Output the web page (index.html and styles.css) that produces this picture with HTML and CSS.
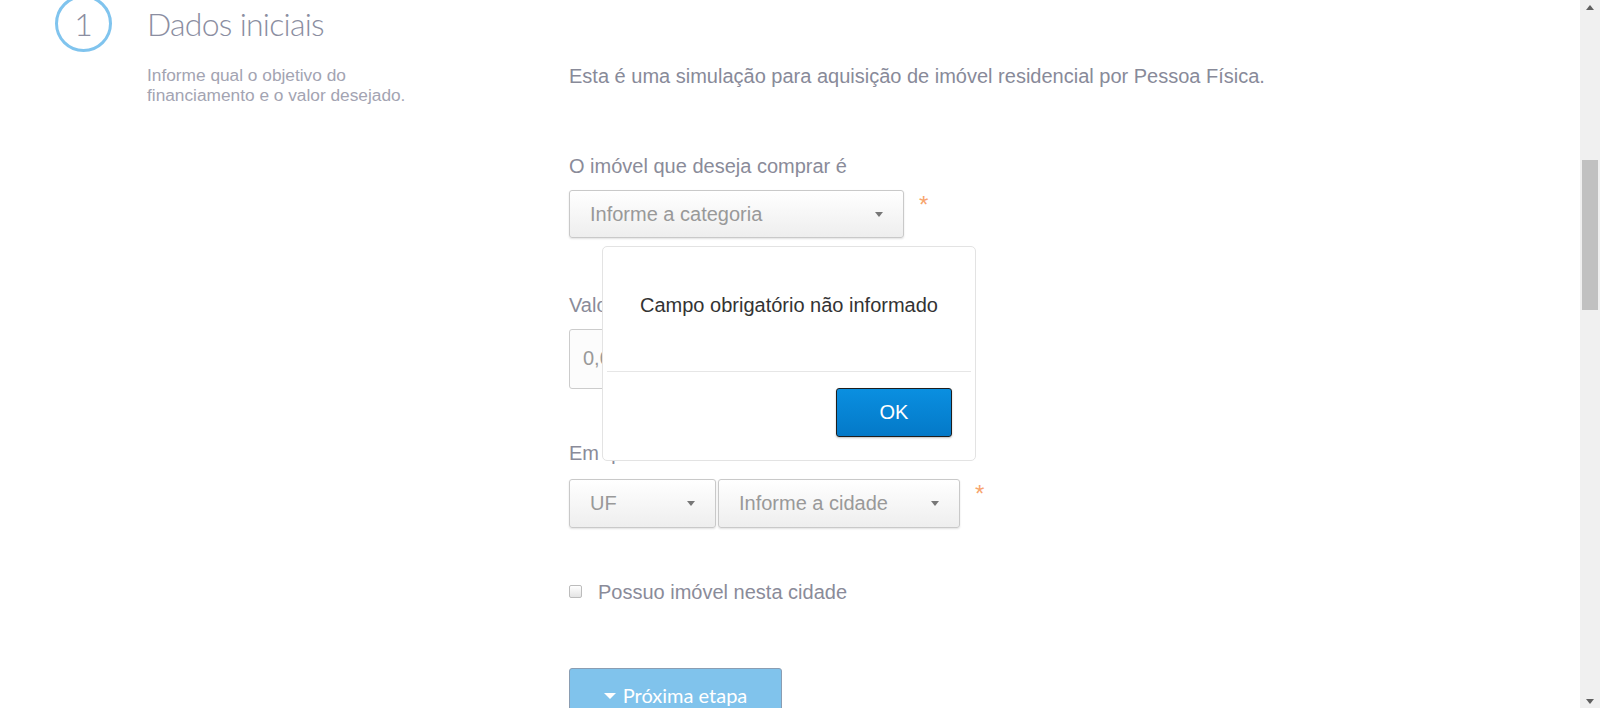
FILE: index.html
```html
<!DOCTYPE html>
<html lang="pt-BR">
<head>
<meta charset="utf-8">
<title>Simulação</title>
<link rel="stylesheet" href="styles.css">
</head>
<body>
<div class="viewport">
  <main class="page">
    <section class="step">
      <div class="step-num">1</div>
      <h2 class="step-title">Dados iniciais</h2>
      <p class="step-desc">Informe qual o objetivo do financiamento e o valor desejado.</p>
      <div class="form">
        <p class="intro">Esta é uma simulação para aquisição de imóvel residencial por Pessoa Física.</p>

        <div class="field field-first">
          <label class="label">O imóvel que deseja comprar é</label>
          <div class="control-row">
            <div class="select select-cat"><span>Informe a categoria</span><i class="caret"></i></div>
            <span class="req">*</span>
          </div>
        </div>

        <div class="field">
          <label class="label">Valor do imóvel</label>
          <div class="input">0,00</div>
        </div>

        <div class="field field-city">
          <label class="label">Em que cidade fica o imóvel?</label>
          <div class="control-row">
            <div class="select select-uf"><span>UF</span><i class="caret"></i></div>
            <div class="select select-city"><span>Informe a cidade</span><i class="caret"></i></div>
            <span class="req">*</span>
          </div>
        </div>

        <div class="check-row"><span class="checkbox"></span><span>Possuo imóvel nesta cidade</span></div>

        <div class="next"><i class="next-caret"></i><span>Próxima etapa</span></div>

        <div class="dialog">
          <div class="dialog-body">Campo obrigatório não informado</div>
          <div class="dialog-foot"><div class="ok">OK</div></div>
        </div>
      </div>
    </section>
  </main>
  <div class="scrollbar">
    <span class="arrow-up"></span>
    <span class="thumb"></span>
    <span class="arrow-down"></span>
  </div>
</div>
</body>
</html>
```

FILE: styles.css
```css
html, body {
  margin: 0;
  padding: 0;
  height: 100%;
  overflow: hidden;
  background: #fff;
}

body {
  font-family: "Liberation Sans", Arial, sans-serif;
}

.viewport {
  display: flex;
  height: 708px;
}

.page {
  flex: 1;
  overflow: hidden;
  height: 708px;
}

.step {
  display: grid;
  grid-template-columns: 92px 422px 1fr;
  grid-template-rows: 52px auto;
  padding-left: 55px;
}

.step-num {
  grid-column: 1;
  grid-row: 1;
  width: 57px;
  height: 57px;
  box-sizing: border-box;
  margin-top: -5px;
  border: 3px solid #80c4ee;
  border-radius: 50%;
  display: flex;
  align-items: center;
  justify-content: center;
  font-family: Lato, "Liberation Sans", sans-serif;
  font-weight: 300;
  font-size: 32px;
  line-height: 32px;
  color: #8b8ea1;
}

.step-title {
  grid-column: 2 / 4;
  grid-row: 1;
  margin: 7.6px 0 0;
  font-family: Lato, "Liberation Sans", sans-serif;
  font-weight: 300;
  font-size: 32px;
  line-height: 32px;
  letter-spacing: -0.75px;
  color: #8b8ea1;
}

.step-desc {
  grid-column: 2;
  grid-row: 2;
  align-self: start;
  margin: 13px 0 0;
  max-width: 280px;
  font-size: 17.3px;
  line-height: 20px;
  color: #a3a4b2;
}

.form {
  grid-column: 3;
  grid-row: 2;
  position: relative;
}

.intro {
  margin: 12px 0 0;
  font-size: 20px;
  line-height: 24px;
  color: #888a99;
}

.field {
  margin-top: 54.5px;
}

.field-first {
  margin-top: 66px;
}

.field-city {
  margin-top: 52.5px;
}

.label {
  display: block;
  margin-bottom: 12px;
  font-size: 20px;
  line-height: 24px;
  color: #8a8b99;
}

.field-city .label {
  margin-bottom: 14px;
}

.control-row {
  display: flex;
  align-items: flex-start;
  gap: 2px;
}

.select {
  box-sizing: border-box;
  height: 48px;
  padding: 0 20px;
  display: flex;
  align-items: center;
  justify-content: space-between;
  border: 1px solid #c9c9c9;
  border-radius: 3px;
  background: linear-gradient(#ffffff, #eeeeee);
  box-shadow: 0 1px 2px rgba(0, 0, 0, 0.12);
  font-size: 20px;
  color: #999;
}

.select-cat {
  width: 335px;
}

.select-uf {
  width: 147px;
  height: 49px;
}

.select-city {
  width: 242px;
  height: 49px;
}

.caret {
  width: 0;
  height: 0;
  border-left: 4px solid transparent;
  border-right: 4px solid transparent;
  border-top: 5px solid #777;
}

.req {
  margin-left: 13px;
  margin-top: 3px;
  font-size: 24px;
  line-height: 24px;
  color: #f7a56e;
}

.input {
  box-sizing: border-box;
  width: 335px;
  height: 60px;
  padding-left: 13px;
  display: flex;
  align-items: center;
  border: 1px solid #cccccc;
  border-radius: 3px;
  background: #fcfcfc;
  font-size: 20px;
  color: #999;
}

.check-row {
  margin-top: 51.5px;
  display: flex;
  align-items: center;
  font-size: 20px;
  line-height: 24px;
  color: #8a8b99;
}

.checkbox {
  box-sizing: border-box;
  width: 13px;
  height: 13px;
  margin-right: 16px;
  border: 1px solid #bcbcbc;
  border-radius: 2px;
  background: linear-gradient(#ffffff, #e4e4e4);
}

.next {
  box-sizing: border-box;
  width: 213px;
  height: 58px;
  margin-top: 64.5px;
  padding-top: 14px;
  display: flex;
  align-items: flex-start;
  justify-content: center;
  background: #80c3ec;
  border: 1px solid #8a9db2;
  border-radius: 3px;
  color: #fff;
  font-family: Lato, "Liberation Sans", sans-serif;
  font-size: 20px;
  line-height: 24px;
}

.next-caret {
  width: 0;
  height: 0;
  margin: 10px 7px 0 0;
  border-left: 6px solid transparent;
  border-right: 6px solid transparent;
  border-top: 6px solid #fff;
}

.dialog {
  position: absolute;
  left: 33px;
  top: 194px;
  width: 374px;
  height: 215px;
  box-sizing: border-box;
  padding: 0 4px;
  display: flex;
  flex-direction: column;
  background: #fff;
  border: 1px solid #e3e3e3;
  border-radius: 5px;
}

.dialog-body {
  box-sizing: border-box;
  height: 125px;
  padding-bottom: 8px;
  display: flex;
  align-items: center;
  justify-content: center;
  border-bottom: 1px solid #e6e6e6;
  font-size: 20px;
  color: #333;
}

.dialog-foot {
  flex: 1;
  display: flex;
  justify-content: flex-end;
  align-items: flex-start;
  padding: 16px 19px 0 0;
}

.ok {
  box-sizing: border-box;
  width: 116px;
  height: 49px;
  display: flex;
  align-items: center;
  justify-content: center;
  background: linear-gradient(#0a8fe0, #0479c8);
  border: 1px solid #1e1e1e;
  border-radius: 3px;
  box-shadow: 0 1px 2px rgba(0, 0, 0, 0.25);
  color: #fff;
  font-size: 20px;
}

.scrollbar {
  flex: none;
  width: 20px;
  height: 708px;
  display: flex;
  flex-direction: column;
  align-items: center;
  background: #f0f0f0;
}

.arrow-up {
  width: 0;
  height: 0;
  margin-top: 5px;
  border-left: 4.5px solid transparent;
  border-right: 4.5px solid transparent;
  border-bottom: 5px solid #606060;
}

.thumb {
  width: 16px;
  height: 150px;
  margin-top: 150px;
  background: #c1c1c1;
}

.arrow-down {
  width: 0;
  height: 0;
  margin-top: auto;
  margin-bottom: 4px;
  border-left: 4.5px solid transparent;
  border-right: 4.5px solid transparent;
  border-top: 5px solid #606060;
}
```
